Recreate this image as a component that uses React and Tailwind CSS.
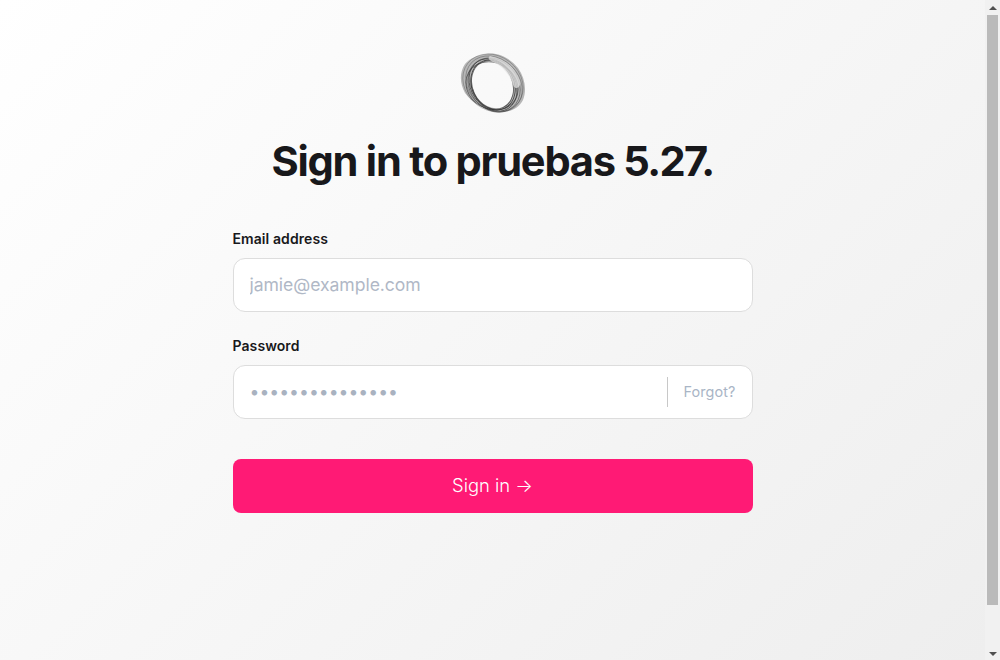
function Logo() {
  const rings = [
    { rx: 32, ry: 27, rot: 38, cx: 35, cy: 32, o: 0.3 },
    { rx: 31, ry: 25, rot: 44, cx: 36, cy: 33, o: 0.35 },
    { rx: 29, ry: 24, rot: 50, cx: 36, cy: 34, o: 0.5 },
    { rx: 28, ry: 22, rot: 56, cx: 35, cy: 34, o: 0.7 },
    { rx: 26, ry: 21, rot: 62, cx: 35, cy: 34, o: 0.85 },
    { rx: 27, ry: 23, rot: 30, cx: 34, cy: 35, o: 0.65 },
    { rx: 25, ry: 20, rot: 65, cx: 34.5, cy: 34, o: 0.7 },
  ];
  return (
    <svg width="70" height="64" viewBox="0 0 70 64" className="block">
      <path
        d="M28 3C40 1 52 7 60 17C67 27 69 39 65 49C60 59 50 62 39 60C27 59 14 52 7 42C2 33 1 22 7 13C12 7 20 4 28 3ZM23.9 10.3A25 20 65 1 0 45.1 55.7A25 20 65 1 0 23.9 10.3Z"
        fill="#9a9a9a"
        fillOpacity="0.7"
        fillRule="evenodd"
      />
      {rings.map((r, i) => (
        <ellipse
          key={i}
          cx={r.cx}
          cy={r.cy}
          rx={r.rx}
          ry={r.ry}
          transform={`rotate(${r.rot} ${r.cx} ${r.cy})`}
          fill="none"
          stroke="#2f2f2f"
          strokeOpacity={r.o}
          strokeWidth="0.9"
        />
      ))}
      <path d="M32 5C42 7 51 12 56 19C60 25 63 30 62 34C61 37 58 38 56 36C54 31 52 25 48 21C44 16 40 13 35 11C31 9 29 7 32 5Z" fill="#e2e2e2" fillOpacity="0.75" />
    </svg>
  );
}

function Scrollbar() {
  return (
    <div className="w-[15px] h-full shrink-0 bg-[#f1f1f1] flex flex-col items-center">
      <div className="h-[15px] flex items-center justify-center">
        <div className="w-0 h-0 border-x-[4px] border-x-transparent border-b-[4px] border-b-[#505050]" />
      </div>
      <div className="w-[11px] h-[590px] bg-[#bababa]" />
      <div className="flex-1 flex items-end justify-center pb-[4px]">
        <div className="w-0 h-0 border-x-[4px] border-x-transparent border-t-[4px] border-t-[#505050]" />
      </div>
    </div>
  );
}

export default function App() {
  return (
    <div className="flex h-[660px] overflow-hidden font-['Inter',sans-serif] text-[#18181b]">
      <main className="flex-1 bg-[linear-gradient(135deg,#ffffff_0%,#eeeeee_100%)] flex flex-col items-center pt-[51px]">
        <Logo />
        <h1 className="mt-[16px] text-[41.6px] leading-[60px] font-bold tracking-[-1.25px] whitespace-nowrap">
          Sign in to pruebas <span className="tracking-[-1.7px]">5.27.</span>
        </h1>
        <form className="w-[520px] mt-[38px] flex flex-col">
          <label className="text-sm leading-5 font-semibold tracking-[0.08px]">Email address</label>
          <div className="mt-[9px] h-[54px] bg-white border border-[#dddddd] rounded-xl flex items-center px-4">
            <input
              type="email"
              placeholder="jamie@example.com"
              className="w-full text-[17.6px] tracking-[-0.06px] outline-none placeholder:text-[#b0b8c6]"
            />
          </div>
          <label className="mt-[24px] text-sm leading-5 font-semibold tracking-[0.08px]">Password</label>
          <div className="mt-[9px] h-[54px] bg-white border border-[#dddddd] rounded-xl flex items-center pl-4 pr-4">
            <input
              type="text"
              placeholder="•••••••••••••••"
              className="flex-1 min-w-0 text-[17.6px] outline-none placeholder:text-[#a9b2c0]"
            />
            <div className="w-px h-[30px] bg-[#c8c8c8] mr-[16px]" />
            <a className="w-[52px] text-[14.4px] font-normal tracking-[0.1px] text-[#a9b5c6] whitespace-nowrap">Forgot?</a>
          </div>
          <button
            type="button"
            className="mt-[40px] h-[54px] bg-[#ff1a75] rounded-lg text-white text-[18.4px] font-light"
          >
            Sign in →
          </button>
        </form>
      </main>
      <Scrollbar />
    </div>
  );
}
